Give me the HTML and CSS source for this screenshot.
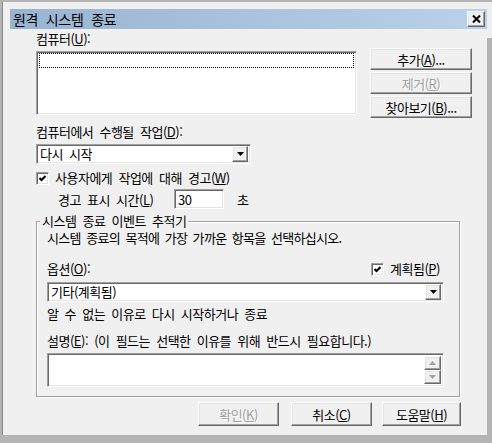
FILE: index.html
```
<!DOCTYPE html>
<html lang="ko">
<head>
    <meta charset="UTF-8">
    <meta name="viewport" content="width=device-width, initial-scale=1.0">
    <title>원격 시스템 종료</title>
    <link rel="stylesheet" href="styles.css">
</head>
<body>
    <div class="frame">
        <div class="window">
            <div class="titlebar">
                <span class="title">원격 시스템 종료</span>
                <button class="close-btn" aria-label="닫기">
                    <svg width="9" height="8" viewBox="0 0 9 8"><path d="M1 0.5 L8 7.5 M8 0.5 L1 7.5" stroke="#000" stroke-width="2" fill="none"/></svg>
                </button>
            </div>

            <div class="client">
                <div class="top-row">
                    <div class="computers">
                        <div class="label">컴퓨터(<u>U</u>):</div>
                        <div class="listbox sunken"><div class="focus-item"></div></div>
                    </div>
                    <div class="side-buttons">
                        <button class="btn">추가(<u>A</u>)...</button>
                        <button class="btn disabled">제거(<u>R</u>)</button>
                        <button class="btn">찾아보기(<u>B</u>)...</button>
                    </div>
                </div>

                <div class="label action-label">컴퓨터에서 수행될 작업(<u>D</u>):</div>
                <div class="combo sunken action-combo">
                    <span class="combo-text">다시 시작</span>
                    <span class="drop-btn"><svg width="7" height="4" viewBox="0 0 7 4"><path d="M0 0 H7 L3.5 4 Z" fill="#000"/></svg></span>
                </div>

                <div class="check-row warn-row">
                    <span class="checkbox"><svg width="7" height="7" viewBox="0 0 7 7"><path d="M0.5 3 L2.5 5 L6.5 1" stroke="#000" stroke-width="2" fill="none"/></svg></span>
                    <span>사용자에게 작업에 대해 경고(<u>W</u>)</span>
                </div>
                <div class="delay-row">
                    <span class="delay-label">경고 표시 시간(<u>L</u>)</span>
                    <span class="textbox sunken">30</span>
                    <span class="unit">초</span>
                </div>

                <fieldset class="group">
                    <legend>시스템 종료 이벤트 추적기</legend>
                    <div class="group-body">
                        <div class="label hint">시스템 종료의 목적에 가장 가까운 항목을 선택하십시오.</div>
                        <div class="option-row">
                            <span>옵션(<u>O</u>):</span>
                            <div class="check-row planned">
                                <span class="checkbox"><svg width="7" height="7" viewBox="0 0 7 7"><path d="M0.5 3 L2.5 5 L6.5 1" stroke="#000" stroke-width="2" fill="none"/></svg></span>
                                <span>계획됨(<u>P</u>)</span>
                            </div>
                        </div>
                        <div class="combo sunken reason-combo">
                            <span class="combo-text">기타(계획됨)</span>
                            <span class="drop-btn"><svg width="7" height="4" viewBox="0 0 7 4"><path d="M0 0 H7 L3.5 4 Z" fill="#000"/></svg></span>
                        </div>
                        <div class="label reason-desc">알 수 없는 이유로 다시 시작하거나 종료</div>
                        <div class="label comment-label">설명(<u>E</u>): (이 필드는 선택한 이유를 위해 반드시 필요합니다.)</div>
                        <div class="memo sunken">
                            <div class="memo-scroll">
                                <span class="scroll-btn"><svg width="7" height="4" viewBox="0 0 7 4"><path d="M3.5 0 L7 4 H0 Z" fill="#a0a0a0"/></svg></span>
                                <span class="scroll-btn"><svg width="7" height="4" viewBox="0 0 7 4"><path d="M0 0 H7 L3.5 4 Z" fill="#a0a0a0"/></svg></span>
                            </div>
                        </div>
                    </div>
                </fieldset>

                <div class="dialog-buttons">
                    <button class="btn disabled ok-btn">확인(<u>K</u>)</button>
                    <button class="btn cancel-btn">취소(<u>C</u>)</button>
                    <button class="btn help-btn">도움말(<u>H</u>)</button>
                </div>
            </div>
        </div>
    </div>
</body>
</html>
```

FILE: styles.css
```
body {
    margin: 0;
    padding: 0;
    font-family: "Noto Sans CJK KR", "Liberation Sans", sans-serif;
    font-size: 13px;
    letter-spacing: -0.5px;
    word-spacing: 3px;
    color: #000;
    background: #b4b4b4;
}

/* outer window border, the right strip only starts below the caption */
.frame {
    width: 492px;
    height: 443px;
    box-sizing: border-box;
    border-style: solid;
    border-color: #b4b4b4;
    border-width: 2px 0 8px 2px;
    box-shadow: inset 1px 0 0 #8a8a8a;
    padding: 7px 5px 0 8px;
    background: linear-gradient(#b4b4b4, #b4b4b4) right 0 top 36px / 5px 100% no-repeat, #f0f0f0;
    overflow: hidden;
}

.window {
    height: 100%;
    display: flex;
    flex-direction: column;
    background: #f0f0f0;
}

u {
    text-underline-offset: 1px;
}

/* title bar */
.titlebar {
    height: 20px;
    flex: none;
    display: flex;
    align-items: center;
    padding: 0 2px 0 3px;
    background: linear-gradient(to right, #99b4d1, #b9d1ea);
}

.title {
    flex: 1;
    font-size: 14px;
    line-height: 16px;
    letter-spacing: -0.3px;
    word-spacing: 4px;
}

.close-btn {
    width: 18px;
    height: 16px;
    padding: 0;
    display: flex;
    align-items: center;
    justify-content: center;
}

/* classic 3d look */
button, .drop-btn, .scroll-btn, .close-btn {
    font: inherit;
    letter-spacing: inherit;
    word-spacing: inherit;
    color: #000;
    background: #f0f0f0;
    box-sizing: border-box;
    border: 1px solid;
    border-color: #fff #696969 #696969 #fff;
    box-shadow: inset -1px -1px 0 #a0a0a0, inset 1px 1px 0 #e3e3e3;
    border-radius: 0;
    margin: 0;
}

.sunken {
    box-sizing: border-box;
    background: #fff;
    border: 1px solid;
    border-color: #a0a0a0 #fff #fff #a0a0a0;
    box-shadow: inset 1px 1px 0 #696969, inset -1px -1px 0 #e3e3e3;
}

.btn {
    height: 22px;
    padding: 0;
}

.btn.disabled {
    color: #a0a0a0;
    text-shadow: 1px 1px 0 #fff;
}

.label {
    line-height: 16px;
    white-space: nowrap;
}

/* client area */
.client {
    flex: 1;
    padding: 2px 0 0 26px;
}

.top-row {
    display: flex;
    gap: 13px;
    align-items: flex-start;
}

.computers {
    width: 321px;
}

.listbox {
    margin-top: 4px;
    height: 64px;
    padding: 1px 2px;
}

.focus-item {
    height: 13px;
    border: 1px dotted #000;
}

.side-buttons {
    width: 102px;
    margin-top: 17px;
    display: flex;
    flex-direction: column;
    gap: 2px;
}

.action-label {
    margin-top: 6px;
}

.combo {
    height: 20px;
    display: flex;
    align-items: center;
    padding: 2px;
}

.combo-text {
    flex: 1;
    padding-left: 1px;
    line-height: 16px;
}

.drop-btn {
    width: 16px;
    height: 16px;
    display: flex;
    align-items: center;
    justify-content: center;
}

.action-combo {
    margin-top: 4px;
    width: 215px;
}

.check-row {
    display: flex;
    align-items: center;
    gap: 6px;
    line-height: 16px;
}

.checkbox {
    width: 13px;
    height: 13px;
    box-sizing: border-box;
    background: #fff;
    border: 1px solid;
    border-color: #a0a0a0 #fff #fff #a0a0a0;
    box-shadow: inset 1px 1px 0 #696969, inset -1px -1px 0 #e3e3e3;
    display: flex;
    align-items: center;
    justify-content: center;
}

.warn-row {
    margin-top: 6px;
}

.delay-row {
    margin-top: 3px;
    height: 20px;
    display: flex;
    align-items: center;
    padding-left: 22px;
}

.delay-label {
    width: 116px;
}

.textbox {
    width: 50px;
    height: 20px;
    padding: 2px 3px;
    line-height: 16px;
}

.unit {
    margin-left: 13px;
}

/* shutdown event tracker group */
.group {
    margin: 5px 0 0 0;
    padding: 0;
    width: 424px;
    box-sizing: border-box;
    border: 1px solid #a0a0a0;
    box-shadow: inset 1px 1px 0 #fff, 1px 1px 0 #fff;
}

.group legend {
    margin-left: 3px;
    padding: 0 2px;
    line-height: 14px;
    background: #f0f0f0;
}

.group-body {
    padding: 2px 15px 9px 10px;
}

.hint {
    letter-spacing: -0.7px;
    word-spacing: 2.5px;
}

.option-row {
    margin-top: 15px;
    display: flex;
    align-items: center;
    justify-content: space-between;
    line-height: 16px;
}

.planned {
    margin-right: 4px;
}

.reason-combo {
    margin-top: 5px;
}

.reason-desc {
    margin-top: 4px;
}

.comment-label {
    margin-top: 11px;
}

.memo {
    margin-top: 4px;
    height: 34px;
    padding: 2px;
    display: flex;
    justify-content: flex-end;
}

.memo-scroll {
    width: 17px;
    display: flex;
    flex-direction: column;
    justify-content: space-between;
    background: #f6f6f6;
}

.scroll-btn {
    height: 14px;
    display: flex;
    align-items: center;
    justify-content: center;
}

/* bottom buttons */
.dialog-buttons {
    width: 425px;
    margin-top: 5px;
    display: flex;
    justify-content: flex-end;
}

.dialog-buttons .btn {
    height: 24px;
    width: 81px;
}

.cancel-btn {
    margin-left: 12px;
}

.dialog-buttons .help-btn {
    margin-left: 10px;
    width: 79px;
}
```
